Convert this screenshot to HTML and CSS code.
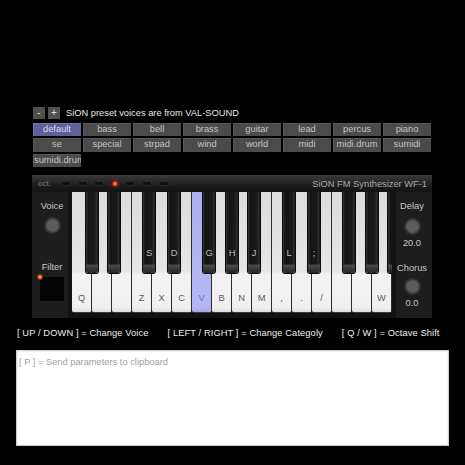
FILE: index.html
```html
<!DOCTYPE html>
<html>
<head>
<meta charset="utf-8">
<title>SiON FM Synthesizer WF-1</title>
<link rel="stylesheet" href="styles.css">
</head>
<body>
<div class="app">
  <div class="presetbar">
    <span class="sq">-</span><span class="sq">+</span>
    <span class="note">SiON preset voices are from VAL-SOUND</span>
  </div>
  <div class="cats">
    <span class="cat sel">default</span>
    <span class="cat">bass</span>
    <span class="cat">bell</span>
    <span class="cat">brass</span>
    <span class="cat">guitar</span>
    <span class="cat">lead</span>
    <span class="cat">percus</span>
    <span class="cat">piano</span>
    <span class="cat">se</span>
    <span class="cat">special</span>
    <span class="cat">strpad</span>
    <span class="cat">wind</span>
    <span class="cat">world</span>
    <span class="cat">midi</span>
    <span class="cat">midi.drum</span>
    <span class="cat">sumidi</span>
    <span class="cat">sumidi.drum</span>
  </div>

  <div class="synth">
    <div class="head">
      <span class="oct">oct.</span>
      <div class="leds"><i></i><i></i><i></i><i class="on"></i><i></i><i></i><i></i></div>
      <span class="title">SiON FM Synthesizer WF-1</span>
    </div>
    <div class="body">
      <div class="side left">
        <span class="lbl voice">Voice</span>
        <span class="knob k1"></span>
        <span class="lbl filter">Filter</span>
        <span class="pad"><span class="dot"></span></span>
      </div>
      <div class="kb">
        <div class="keys">
          <div class="w"><span>Q</span><div class="b"></div></div>
          <div class="w"><div class="b r"></div></div>
          <div class="w"></div>
          <div class="w"><span>Z</span><div class="b l"><span>S</span></div></div>
          <div class="w"><span>X</span><div class="b r"><span>D</span></div></div>
          <div class="w"><span>C</span></div>
          <div class="w on"><span>V</span><div class="b l"><span>G</span></div></div>
          <div class="w"><span>B</span><div class="b"><span>H</span></div></div>
          <div class="w"><span>N</span><div class="b r"><span>J</span></div></div>
          <div class="w"><span>M</span></div>
          <div class="w"><span>,</span><div class="b l"><span>L</span></div></div>
          <div class="w"><span>.</span><div class="b r"><span>;</span></div></div>
          <div class="w"><span>/</span></div>
          <div class="w"><div class="b l"></div></div>
          <div class="w"><div class="b"></div></div>
          <div class="w"><span>W</span><div class="b r"></div></div>
        </div>
      </div>
      <div class="side right">
        <span class="lbl delay">Delay</span>
        <span class="knob k2"></span>
        <span class="val">20.0</span>
        <span class="lbl chorus">Chorus</span>
        <span class="knob k3"></span>
        <span class="val">0.0</span>
      </div>
    </div>
  </div>

  <div class="help">
    <span>[ UP / DOWN ] = Change Voice</span>
    <span>[ LEFT / RIGHT ] = Change Categoly</span>
    <span>[ Q / W ] = Octave Shift</span>
  </div>

  <textarea class="clip" placeholder="[ P ] = Send parameters to clipboard"></textarea>
</div>
</body>
</html>
```

FILE: styles.css
```css
* { box-sizing: border-box; }

html, body {
  margin: 0;
  background: #000;
}

body {
  width: 465px;
  height: 465px;
  overflow: hidden;
  font-family: "Liberation Sans", Arial, sans-serif;
  font-size: 9.3px;
  color: #ddd;
}

.app {
  padding-top: 107px;
}

/* preset bar */
.presetbar {
  display: flex;
  align-items: center;
  height: 12px;
  margin-left: 33px;
  gap: 3px;
}

.sq {
  width: 12px;
  height: 12px;
  background: #505050;
  color: #ddd;
  display: flex;
  align-items: center;
  justify-content: center;
  font-size: 10px;
  line-height: 1;
}

.note {
  margin-left: 3px;
  color: #e8e8e8;
}

.cats {
  display: grid;
  grid-template-columns: repeat(8, 48px);
  grid-auto-rows: 13.5px;
  column-gap: 2px;
  row-gap: 2px;
  margin: 3.5px 0 0 33px;
}

.cat {
  background: #4b4b4b;
  box-shadow: inset 1px 1px 0 #585858;
  color: #c4c4c4;
  text-align: center;
  line-height: 13.5px;
  white-space: nowrap;
  overflow: hidden;
  text-overflow: clip;
  padding: 0 1px;
}

.cat.sel {
  background: #60609a;
  box-shadow: inset 1px 1px 0 #7070aa;
  color: #d8d8ee;
}

/* synth panel */
.synth {
  margin: 8px 0 0 32px;
  width: 400px;
  background: #1d1d1d;
}

.head {
  height: 17px;
  display: flex;
  align-items: center;
  padding: 0 5px 0 6px;
  background: linear-gradient(#3a3a3a, #1a1a1a 70%, #141414);
}

.oct {
  width: 23px;
  color: #777;
  font-size: 8px;
}

.leds {
  display: flex;
  gap: 6.6px;
}

.leds i {
  display: block;
  width: 10px;
  height: 5px;
  border-radius: 1px;
  background: #111;
  box-shadow: inset 0 0 0 1px #2a2a2a;
}

.leds i.on {
  width: 8px;
  background: radial-gradient(circle at 50% 55%, #ff6040 0 1.5px, #a02010 2.5px, #3a1410 4px, #111 5px);
  box-shadow: 0 0 3px #802010;
}

.title {
  margin-left: auto;
  color: #a8a8a8;
}

.body {
  display: flex;
  height: 126px;
}

.side {
  width: 36px;
  display: flex;
  flex-direction: column;
  align-items: center;
  color: #c8c8c8;
}

.side.left { padding-left: 4px; }
.side.right { padding-right: 4px; }

.lbl, .val {
  line-height: 11px;
  height: 11px;
}

.voice { margin-top: 9px; }
.delay { margin-top: 9px; }

.knob {
  display: block;
  width: 17px;
  height: 17px;
  border-radius: 50%;
  background: radial-gradient(circle at 50% 50%, #5c5c5c 0 5px, #4a4a4a 6.5px, #2c2c2c 7.5px, #383838 8.5px);
}

.k1 { margin-top: 5px; }
.k2 { margin-top: 6px; }
.k3 { margin-top: 4px; }

.val { margin-top: 3px; }
.chorus { margin-top: 14px; }

.filter { margin-top: 28px; }

.pad {
  position: relative;
  display: block;
  width: 24px;
  height: 24px;
  margin-top: 4px;
  background: #040404;
}

.dot {
  position: absolute;
  left: -3px;
  top: -3px;
  width: 6px;
  height: 6px;
  border-radius: 50%;
  background: radial-gradient(circle, #ff9050 0 1px, #d04818 2px, rgba(140,40,10,0.5) 3px, transparent 3.5px);
}

/* keyboard */
.kb {
  background: #111;
  padding: 0 4px 5px;
}

.keys {
  position: relative;
  display: flex;
  width: 320px;
  height: 121px;
  overflow: hidden;
}

.w {
  position: relative;
  width: 20px;
  height: 121px;
  flex: none;
  border-right: 1px solid #2c2c2c;
  border-bottom: 1px solid #3a3a3a;
  border-radius: 0 0 2px 2px;
  background: linear-gradient(#dcdcdc, #e6e6e6 66%, #f2f2f2 69%, #f0f0f0 96%, #dedede);
  display: flex;
  align-items: flex-end;
  justify-content: center;
  padding-bottom: 8px;
  color: #5a5a5a;
  line-height: 11px;
}

.w.on {
  background: linear-gradient(#b0b0f0, #b6b6f4 95%, #a6a6e0);
  color: #7070b0;
}

.b {
  position: absolute;
  top: 0;
  right: -7px;
  width: 12px;
  height: 81px;
  z-index: 2;
  border-radius: 0 0 2px 2px;
  background:
    linear-gradient(transparent 72px, #4a4a4a 73px, #383838 77px, #242424 81px),
    linear-gradient(to right, #3a3a3a, #141414 2px, #1a1a1a 9px, #323232 11px, #0c0c0c);
  box-shadow: 0 0 0 1px #0a0a0a;
}

.b.l { right: -4px; }
.b.r { right: -9px; }

.b span {
  position: absolute;
  left: 0;
  right: 0;
  top: 56px;
  text-align: center;
  line-height: 11px;
  color: #bdbdbd;
}

/* help line */
.help {
  display: flex;
  gap: 19px;
  padding-left: 17px;
  margin-top: 9px;
  line-height: 12px;
  color: #eee;
  letter-spacing: 0.1px;
}

.clip {
  display: block;
  margin: 11px 0 0 16px;
  width: 433px;
  height: 96px;
  border: 1px solid #cfcfcf;
  box-shadow: inset 0 0 0 1px #f2f2f2;
  background: #fff;
  resize: none;
  padding: 5px 2px;
  font-family: "Liberation Sans", Arial, sans-serif;
  font-size: 9.3px;
  line-height: 12px;
  color: #333;
  outline: none;
}

.clip::placeholder {
  color: #a0a0a0;
}
```
